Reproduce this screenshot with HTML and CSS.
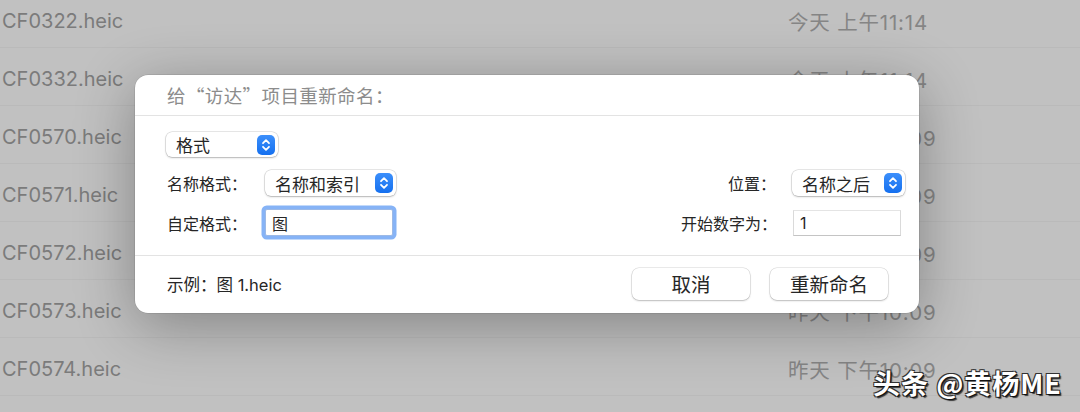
FILE: index.html
```html
<!DOCTYPE html>
<html lang="zh-CN">
<head>
    <meta charset="UTF-8">
    <meta name="viewport" content="width=device-width, initial-scale=1.0">
    <title>重新命名</title>
    <link rel="stylesheet" href="styles.css">
</head>
<body>

    <div class="file-list">
        <div class="file-row"><span class="file-name">CF0322.heic</span><span class="file-date">今天 上午11:14</span></div>
        <div class="file-row"><span class="file-name">CF0332.heic</span><span class="file-date">今天 上午11:14</span></div>
        <div class="file-row"><span class="file-name">CF0570.heic</span><span class="file-date">昨天 下午10:09</span></div>
        <div class="file-row"><span class="file-name">CF0571.heic</span><span class="file-date">昨天 下午10:09</span></div>
        <div class="file-row"><span class="file-name">CF0572.heic</span><span class="file-date">昨天 下午10:09</span></div>
        <div class="file-row"><span class="file-name">CF0573.heic</span><span class="file-date">昨天 下午10:09</span></div>
        <div class="file-row"><span class="file-name">CF0574.heic</span><span class="file-date">昨天 下午10:09</span></div>
    </div>

    <div class="dialog">
        <div class="dialog-title">给“访达”项目重新命名：</div>

        <div class="dialog-body">
            <div class="form-row">
                <div class="popup popup-mode">
                    <span>格式</span>
                    <span class="stepper">
                        <svg viewBox="0 0 18 20"><path d="M6 8.2 9 5.2 12 8.2M6 11.8 9 14.8 12 11.8"/></svg>
                    </span>
                </div>
            </div>

            <div class="form-row">
                <div class="group">
                    <span class="label">名称格式：</span>
                    <div class="popup popup-format">
                        <span>名称和索引</span>
                        <span class="stepper">
                            <svg viewBox="0 0 18 20"><path d="M6 8.2 9 5.2 12 8.2M6 11.8 9 14.8 12 11.8"/></svg>
                        </span>
                    </div>
                </div>
                <div class="group group-right">
                    <span class="label-right">位置：</span>
                    <div class="popup popup-place">
                        <span>名称之后</span>
                        <span class="stepper">
                            <svg viewBox="0 0 18 20"><path d="M6 8.2 9 5.2 12 8.2M6 11.8 9 14.8 12 11.8"/></svg>
                        </span>
                    </div>
                </div>
            </div>

            <div class="form-row">
                <div class="group">
                    <span class="label">自定格式：</span>
                    <div class="field field-focus">图</div>
                </div>
                <div class="group group-right">
                    <span class="label-right">开始数字为：</span>
                    <div class="field field-number">1</div>
                </div>
            </div>
        </div>

        <div class="dialog-footer">
            <span class="example">示例：图 1.heic</span>
            <div class="buttons">
                <button class="btn">取消</button>
                <button class="btn">重新命名</button>
            </div>
        </div>
    </div>

    <div class="watermark">头条 @黄杨ME</div>

</body>
</html>
```

FILE: styles.css
```css
:root {
    --bg: #c1c1c1;
    --row-text: #7b7b7b;
    --text: #262626;
    --muted: #8c8c8c;
    --line: #e3e3e3;
    --blue-top: #3c8ffb;
    --blue-bottom: #1570ef;
    --focus: #86b3f6;
}

*, *::before, *::after {
    box-sizing: border-box;
    margin: 0;
    padding: 0;
}

html, body {
    width: 1080px;
    height: 412px;
    overflow: hidden;
}

body {
    font-family: Inter, "Noto Sans CJK SC", sans-serif;
    background: var(--bg);
    position: relative;
}

/* background finder list */
.file-list {
    margin-top: -10px;
}

.file-row {
    height: 58px;
    display: flex;
    align-items: center;
    padding-top: 5px;
    border-bottom: 1px solid rgba(0, 0, 0, 0.035);
}

.file-name {
    width: 788px;
    padding-left: 2px;
    font-size: 20px;
    color: var(--row-text);
}

.file-date {
    font-size: 20.5px;
    letter-spacing: 0.8px;
    color: var(--row-text);
    opacity: 0.85;
}

/* rename sheet */
.dialog {
    position: absolute;
    left: 135px;
    top: 75px;
    width: 784px;
    height: 238px;
    background: #fff;
    border-radius: 13px;
    box-shadow: 0 12px 60px rgba(0, 0, 0, 0.32), 0 0 0 0.5px rgba(0, 0, 0, 0.15);
    display: flex;
    flex-direction: column;
}

.dialog-title {
    height: 41px;
    padding: 7px 0 0 32px;
    font-family: "Noto Sans CJK SC", sans-serif;
    font-size: 18.5px;
    letter-spacing: 0.4px;
    color: var(--muted);
    border-bottom: 1px solid var(--line);
}

.dialog-body {
    height: 140px;
    padding: 16px 14px 0 31px;
    display: flex;
    flex-direction: column;
    gap: 13px;
    border-bottom: 1px solid var(--line);
}

.form-row {
    display: flex;
    justify-content: space-between;
    align-items: center;
}

.group {
    display: flex;
    align-items: center;
}

.label {
    width: 99px;
    padding-left: 1px;
    font-size: 16px;
    color: var(--text);
}

.label-right {
    font-size: 16px;
    color: var(--text);
    margin-right: 16px;
}

.popup {
    height: 26px;
    background: #fff;
    border-radius: 6px;
    box-shadow: 0 0 0 0.5px rgba(0, 0, 0, 0.18), 0 1px 2px rgba(0, 0, 0, 0.22);
    display: flex;
    align-items: center;
    justify-content: space-between;
    padding: 0 3px 0 10px;
    font-size: 17px;
    color: var(--text);
}

.popup-mode {
    width: 112px;
    height: 25px;
}

.popup-format {
    width: 131px;
}

.popup-place {
    width: 113px;
}

.stepper {
    width: 18px;
    height: 20px;
    border-radius: 5px;
    background: linear-gradient(var(--blue-top), var(--blue-bottom));
    display: flex;
}

.stepper svg {
    width: 18px;
    height: 20px;
    fill: none;
    stroke: #fff;
    stroke-width: 1.8;
    stroke-linecap: round;
    stroke-linejoin: round;
}

.field {
    height: 26px;
    background: #fff;
    font-size: 16px;
    color: var(--text);
    display: flex;
    align-items: center;
    padding-left: 6px;
}

.field-focus {
    width: 128px;
    height: 27px;
    border: 1px solid #9cb9e6;
    border-radius: 2px;
    box-shadow: 0 0 0 3.5px var(--focus);
}

.field-number {
    width: 108px;
    margin-right: 4px;
    border: 1px solid #dadada;
    border-bottom-color: #c4c4c4;
    border-top-color: #e4e4e4;
}

.dialog-footer {
    flex: 1;
    display: flex;
    align-items: center;
    justify-content: space-between;
    padding: 0 31px 2px 32px;
}

.example {
    font-size: 16.5px;
    color: var(--text);
}

.buttons {
    display: flex;
    gap: 20px;
}

.btn {
    width: 118px;
    height: 32px;
    border: none;
    background: #fff;
    border-radius: 7px;
    box-shadow: 0 0 0 0.5px rgba(0, 0, 0, 0.16), 0 1px 2px rgba(0, 0, 0, 0.2);
    font-family: Inter, "Noto Sans CJK SC", sans-serif;
    font-size: 19.5px;
    color: var(--text);
}

/* overlay watermark */
.watermark {
    position: absolute;
    left: 873px;
    top: 363px;
    font-family: "Noto Sans CJK SC", sans-serif;
    font-size: 27px;
    font-weight: 600;
    letter-spacing: 1px;
    color: #fff;
    text-shadow: 1px 1px 0 #111, -1px -1px 0 #333, 1px -1px 0 #333, -1px 1px 0 #333, 2px 2px 1px rgba(0, 0, 0, 0.7);
}
```
